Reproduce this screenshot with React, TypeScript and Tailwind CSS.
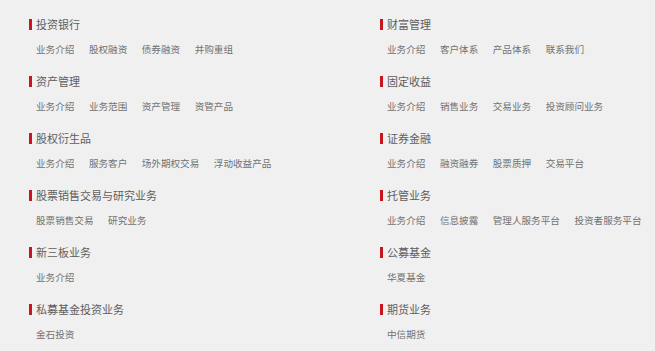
import React from "react";

const sections: { title: string; items: string[] }[][] = [
  [
    { title: "投资银行", items: ["业务介绍", "股权融资", "债券融资", "并购重组"] },
    { title: "资产管理", items: ["业务介绍", "业务范围", "资产管理", "资管产品"] },
    { title: "股权衍生品", items: ["业务介绍", "服务客户", "场外期权交易", "浮动收益产品"] },
    { title: "股票销售交易与研究业务", items: ["股票销售交易", "研究业务"] },
    { title: "新三板业务", items: ["业务介绍"] },
    { title: "私募基金投资业务", items: ["金石投资"] },
  ],
  [
    { title: "财富管理", items: ["业务介绍", "客户体系", "产品体系", "联系我们"] },
    { title: "固定收益", items: ["业务介绍", "销售业务", "交易业务", "投资顾问业务"] },
    { title: "证券金融", items: ["业务介绍", "融资融券", "股票质押", "交易平台"] },
    { title: "托管业务", items: ["业务介绍", "信息披露", "管理人服务平台", "投资者服务平台"] },
    { title: "公募基金", items: ["华夏基金"] },
    { title: "期货业务", items: ["中信期货"] },
  ],
];

function Column({ list }: { list: { title: string; items: string[] }[] }) {
  return (
    <div className="flex flex-col">
      {list.map((s) => (
        <div key={s.title} className="mb-[17px] flex flex-col">
          <div className="flex h-[16px] items-center">
            <span className="mr-[4px] h-[11px] w-[3px] bg-[#c8161e]" />
            <span className="text-[11px] leading-[16px] text-[#5e5e5e]">{s.title}</span>
          </div>
          <div className="mt-[10px] flex gap-[14.5px] pl-[7px] text-[9.6px] leading-[14px] text-[#727272]">
            {s.items.map((it) => (
              <span key={it}>{it}</span>
            ))}
          </div>
        </div>
      ))}
    </div>
  );
}

export default function App() {
  return (
    <div
      className="h-[351px] w-[655px] overflow-hidden bg-[#f0f0f0] pl-[29px] pt-4"
      style={{ fontFamily: '"Noto Sans CJK SC", "Noto Sans", sans-serif' }}
    >
      <div className="grid grid-cols-[351px_1fr]">
        <Column list={sections[0]} />
        <Column list={sections[1]} />
      </div>
    </div>
  );
}
